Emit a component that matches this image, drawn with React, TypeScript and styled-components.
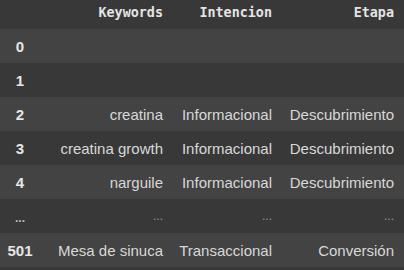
import React from 'react'
import styled, { createGlobalStyle } from 'styled-components'

type Row = {
    index: string
    keyword: string
    intencion: string
    etapa: string
    gap?: boolean
}

const columns = ['Keywords', 'Intencion', 'Etapa']

const rows: Row[] = [
    { index: '0', keyword: '', intencion: '', etapa: '' },
    { index: '1', keyword: '', intencion: '', etapa: '' },
    { index: '2', keyword: 'creatina', intencion: 'Informacional', etapa: 'Descubrimiento' },
    { index: '3', keyword: 'creatina growth', intencion: 'Informacional', etapa: 'Descubrimiento' },
    { index: '4', keyword: 'narguile', intencion: 'Informacional', etapa: 'Descubrimiento' },
    { index: '...', keyword: '...', intencion: '...', etapa: '...', gap: true },
    { index: '501', keyword: 'Mesa de sinuca', intencion: 'Transaccional', etapa: 'Conversión' },
]

const GlobalStyle = createGlobalStyle`
    html, body {
        margin: 0;
        padding: 0;
        background: #383838;
    }
`

const App = () => {
    return (
        <>
            <GlobalStyle />
            <Frame>
                <Table>
                    <colgroup>
                        <col style={{ width: 40 }} />
                        <col style={{ width: 133 }} />
                        <col style={{ width: 109 }} />
                        <col style={{ width: 122 }} />
                    </colgroup>
                    <thead>
                        <HeadRow>
                            <HeadCell />
                            {columns.map((c) => (
                                <HeadCell key={c}>{c}</HeadCell>
                            ))}
                        </HeadRow>
                    </thead>
                    <tbody>
                        {rows.map((r, i) => (
                            <BodyRow key={r.index} striped={i % 2 === 0}>
                                <IndexCell dim={r.gap}>{r.index}</IndexCell>
                                <Cell dim={r.gap}>{r.keyword}</Cell>
                                <Cell dim={r.gap}>{r.intencion}</Cell>
                                <Cell dim={r.gap}>{r.etapa}</Cell>
                            </BodyRow>
                        ))}
                    </tbody>
                </Table>
            </Frame>
        </>
    )
}

export default App

const Frame = styled.div`
    width: 404px;
    height: 270px;
    overflow: hidden;
    background: #383838;
`

const Table = styled.table`
    width: 404px;
    table-layout: fixed;
    border-collapse: collapse;
    border-spacing: 0;
`

const HeadRow = styled.tr`
    height: 29px;
    background: #383838;
    border-bottom: 1px solid #454545;
`

const HeadCell = styled.th`
    padding: 0 10px 3px 0;
    text-align: right;
    font-family: 'DejaVu Sans Mono', 'Liberation Mono', monospace;
    font-weight: bold;
    font-size: 13.4px;
    color: #e4e4e4;
    white-space: nowrap;
`

const BodyRow = styled.tr<{ striped?: boolean }>`
    height: 34px;
    background: ${({ striped }) => (striped ? '#434343' : '#383838')};
`

const IndexCell = styled.th<{ dim?: boolean }>`
    padding: ${({ dim }) => (dim ? '4px 0 0 0' : '0')};
    text-align: center;
    font-family: 'Liberation Sans', Arial, sans-serif;
    font-weight: bold;
    font-size: ${({ dim }) => (dim ? '12px' : '15px')};
    color: ${({ dim }) => (dim ? '#b8b8b8' : '#e6e6e6')};
`

const Cell = styled.td<{ dim?: boolean }>`
    padding: 0 10px 0 0;
    text-align: right;
    font-family: 'Liberation Sans', Arial, sans-serif;
    font-size: ${({ dim }) => (dim ? '12px' : '15px')};
    color: ${({ dim }) => (dim ? '#9a9a9a' : '#d8d8d8')};
    white-space: nowrap;
`
